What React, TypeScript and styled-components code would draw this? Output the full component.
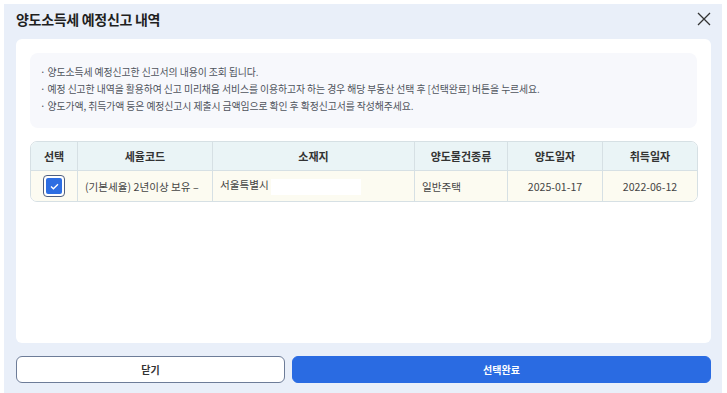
import React from "react";
import styled, { createGlobalStyle } from "styled-components";

const Global = createGlobalStyle`
  html, body { margin: 0; padding: 0; background: #ffffff; }
  body { font-family: "Noto Sans CJK KR", "Noto Sans", sans-serif; }
  * { box-sizing: border-box; }
`;

const Modal = styled.div`
  margin: 4px 5px 0 4px;
  height: 389px;
  background: #e9eff9;
  display: flex;
  flex-direction: column;
  padding: 0 11px 10px 12px;
`;

const Header = styled.div`
  height: 35px;
  padding-bottom: 5px;
  display: flex;
  align-items: center;
  justify-content: space-between;
`;

const Title = styled.h1`
  margin: 0;
  font-size: 14px;
  font-weight: 700;
  color: #1f1f1f;
  letter-spacing: -0.3px;
`;

const CloseBtn = styled.button`
  border: 0;
  background: transparent;
  padding: 0;
  margin-right: -2px;
  width: 18px;
  height: 18px;
  display: flex;
  align-items: center;
  justify-content: center;
  cursor: pointer;
`;

const Card = styled.div`
  height: 304px;
  background: #ffffff;
  border-radius: 6px;
  padding: 14px 14px;
  display: flex;
  flex-direction: column;
  gap: 13px;
`;

const Notice = styled.ul`
  margin: 0;
  list-style: none;
  height: 75px;
  background: #f7f8fc;
  border-radius: 8px;
  padding: 11px 10px 0 10px;
`;

const NoticeItem = styled.li`
  font-size: 9.9px;
  line-height: 17px;
  color: #4f545c;
  white-space: nowrap;
  letter-spacing: -0.1px;
`;

const Table = styled.table`
  width: 666px;
  border-collapse: separate;
  border-spacing: 0;
  border: 1px solid #d6e0e4;
  border-radius: 7px;
  overflow: hidden;
  table-layout: fixed;
`;

const Th = styled.th`
  height: 29px;
  background: #eaf4f6;
  font-size: 11px;
  font-weight: 700;
  color: #333;
  text-align: center;
  border-bottom: 1px solid #d6e0e4;
  border-left: 1px solid #d6e0e4;
  padding: 0;
  &:first-child { border-left: 0; }
`;

const Td = styled.td<{ $align?: string }>`
  height: 30px;
  background: #fcfbf1;
  font-size: 10.6px;
  color: #444;
  text-align: ${(p) => p.$align || "center"};
  padding: 0 ${(p) => (p.$align === "left" ? "7px" : "0")};
  border-left: 1px solid #d6e0e4;
  white-space: nowrap;
  &:first-child { border-left: 0; }
`;

const CheckBox = styled.span`
  display: inline-flex;
  width: 22px;
  height: 22px;
  border: 1.5px solid #4e5f80;
  border-radius: 4px;
  padding: 2px;
  vertical-align: middle;
  background: #fff;
`;

const CheckFill = styled.span`
  flex: 1;
  background: #2d6ee2;
  border-radius: 2px;
  display: flex;
  align-items: center;
  justify-content: center;
`;

const Redacted = styled.span`
  display: inline-block;
  width: 90px;
  height: 16px;
  background: #ffffff;
  vertical-align: middle;
  margin-left: 2px;
`;

const Footer = styled.div`
  margin-top: 13px;
  display: grid;
  grid-template-columns: 269px 1fr;
  gap: 7px;
`;

const Button = styled.button<{ $primary?: boolean }>`
  height: 27px;
  border-radius: 6px;
  font-family: inherit;
  font-size: 10px;
  font-weight: 700;
  cursor: pointer;
  border: 1px solid ${(p) => (p.$primary ? "#2a6be2" : "#6d7c98")};
  background: ${(p) => (p.$primary ? "#2a6be2" : "#ffffff")};
  color: ${(p) => (p.$primary ? "#ffffff" : "#333")};
`;

const cols = [46, 135, 202, 93, 95, 95];

export default function App() {
  return (
    <>
      <Global />
      <Modal>
        <Header>
          <Title>양도소득세 예정신고 내역</Title>
          <CloseBtn aria-label="닫기">
            <svg width="14" height="14" viewBox="0 0 14 14">
              <path d="M1 1 L13 13 M13 1 L1 13" stroke="#333" strokeWidth="1.3" fill="none" />
            </svg>
          </CloseBtn>
        </Header>
        <Card>
          <Notice>
            <NoticeItem>· 양도소득세 예정신고한 신고서의 내용이 조회 됩니다.</NoticeItem>
            <NoticeItem>· 예정 신고한 내역을 활용하여 신고 미리채움 서비스를 이용하고자 하는 경우 해당 부동산 선택 후 [선택완료] 버튼을 누르세요.</NoticeItem>
            <NoticeItem>· 양도가액, 취득가액 등은 예정신고시 제출시 금액임으로 확인 후 확정신고서를 작성해주세요.</NoticeItem>
          </Notice>
          <Table>
            <colgroup>
              {cols.map((w, i) => (
                <col key={i} style={{ width: w }} />
              ))}
            </colgroup>
            <thead>
              <tr>
                <Th>선택</Th>
                <Th>세율코드</Th>
                <Th>소재지</Th>
                <Th>양도물건종류</Th>
                <Th>양도일자</Th>
                <Th>취득일자</Th>
              </tr>
            </thead>
            <tbody>
              <tr>
                <Td>
                  <CheckBox>
                    <CheckFill>
                      <svg width="9" height="7" viewBox="0 0 9 7">
                        <path d="M1 3.5 L3.4 5.8 L8 1.2" stroke="#fff" strokeWidth="1.3" fill="none" />
                      </svg>
                    </CheckFill>
                  </CheckBox>
                </Td>
                <Td $align="left">(기본세율) 2년이상 보유 –</Td>
                <Td $align="left">
                  서울특별시
                  <Redacted />
                </Td>
                <Td $align="left">일반주택</Td>
                <Td>2025-01-17</Td>
                <Td>2022-06-12</Td>
              </tr>
            </tbody>
          </Table>
        </Card>
        <Footer>
          <Button>닫기</Button>
          <Button $primary>선택완료</Button>
        </Footer>
      </Modal>
    </>
  );
}
